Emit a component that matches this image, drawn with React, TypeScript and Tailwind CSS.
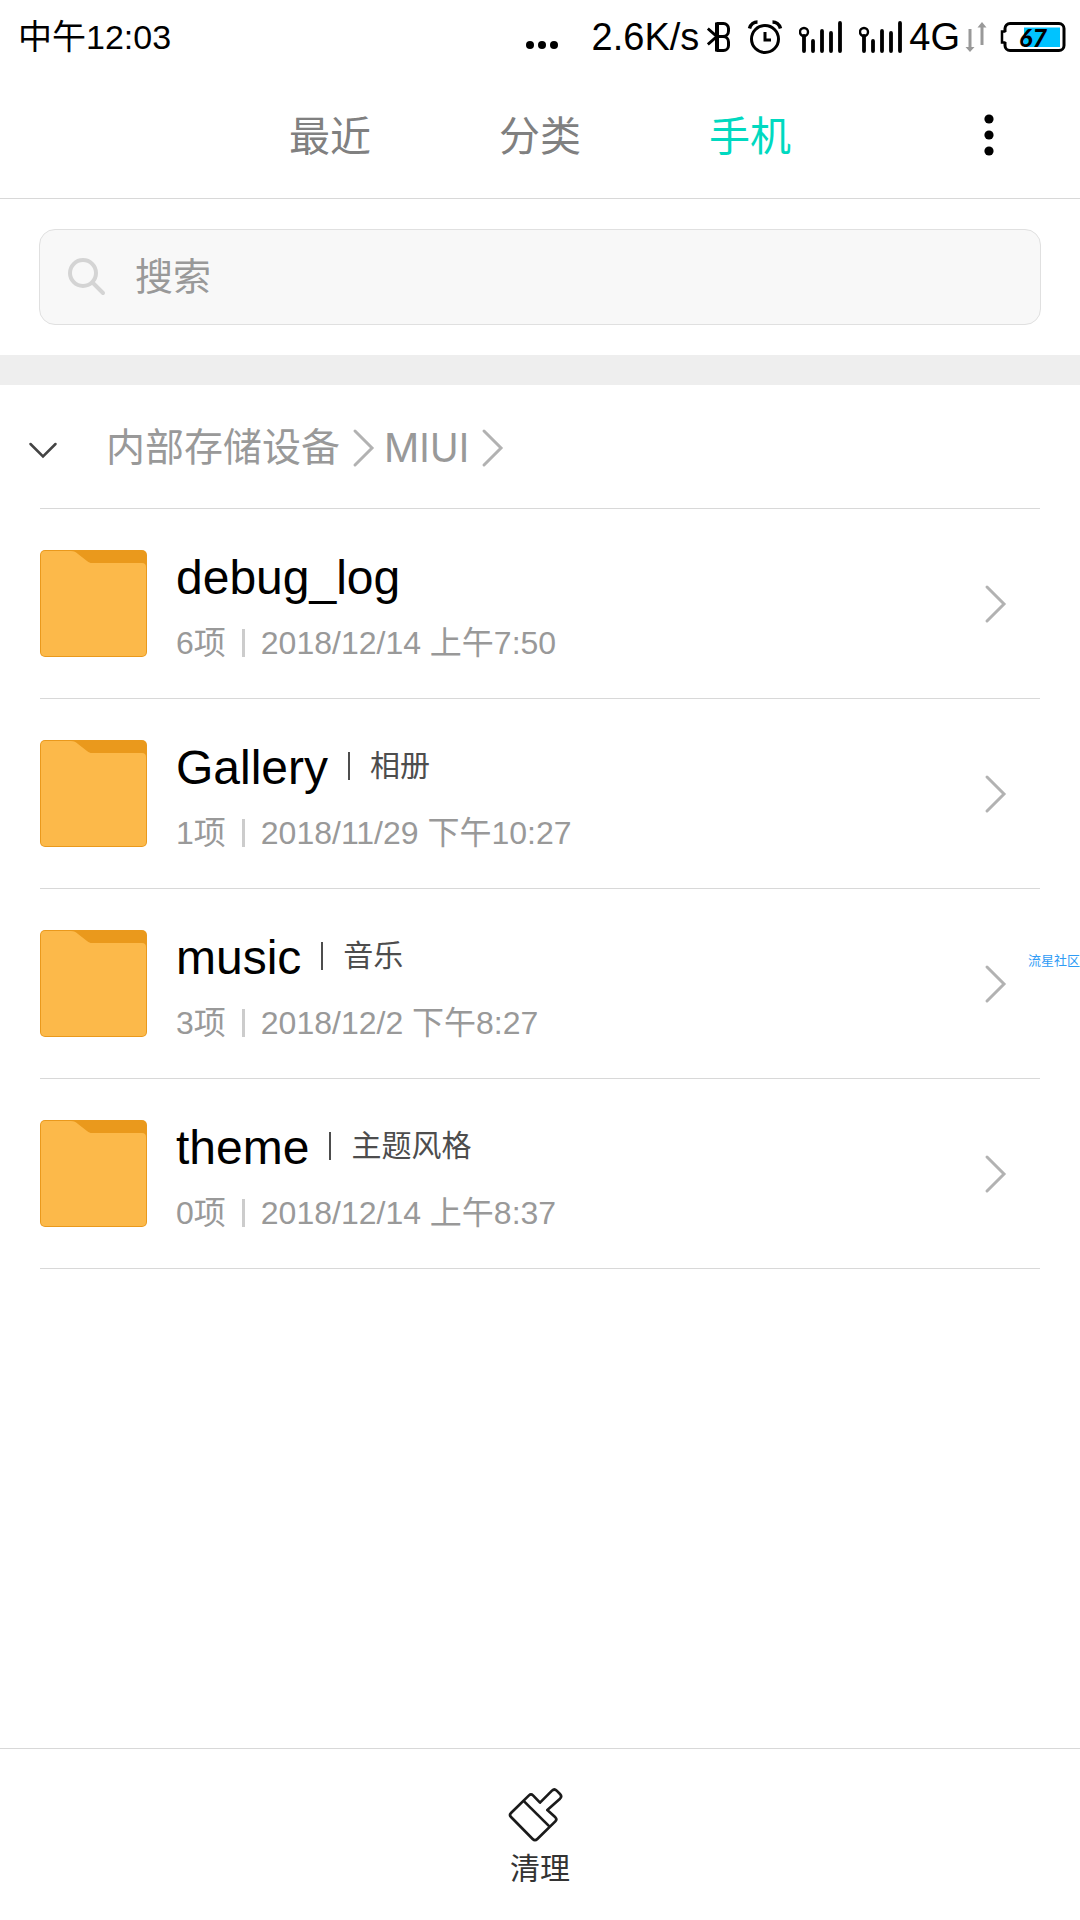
import { useState } from 'react';

interface Folder {
  name: string;
  alias?: string;
  count: number;
  date: string;
  badge?: string;
}

const tabs = ['最近', '分类', '手机'];

const folders: Folder[] = [
  { name: 'debug_log', count: 6, date: '2018/12/14 上午7:50' },
  { name: 'Gallery', alias: '相册', count: 1, date: '2018/11/29 下午10:27' },
  { name: 'music', alias: '音乐', count: 3, date: '2018/12/2 下午8:27', badge: '流星社区' },
  { name: 'theme', alias: '主题风格', count: 0, date: '2018/12/14 上午8:37' },
];

function SignalIcon() {
  return (
    <svg className="w-11 h-8" viewBox="0 0 44 32" fill="none" stroke="#000">
      <circle cx="5" cy="11" r="4" strokeWidth="2.4" />
      <path d="M5 15v15M14 20v10M23 10v20M32 12v18M41 2v28" strokeWidth="3.8" strokeLinecap="round" />
    </svg>
  );
}

function BluetoothIcon() {
  return (
    <svg className="w-6 h-8" viewBox="0 0 24 32" fill="none" stroke="#000" strokeWidth="3">
      <path d="M9.500 2.500h7a5 5 0 0 1 5 5v2.500a5.500 5.500 0 0 1-5.500 5.500h-5M10 15.500h6a5.500 5.500 0 0 1 5.500 5.500v3.500a5 5 0 0 1-5 5h-7" />
      <path d="M10 1.500v29" strokeWidth="4" />
      <path d="M.8 7.500l9 8-9 8" />
    </svg>
  );
}

function AlarmIcon() {
  return (
    <svg className="w-9 h-9" viewBox="0 0 36 36" fill="none" stroke="#000">
      <circle cx="18" cy="20" r="13.500" strokeWidth="3" />
      <path d="M18 13v8h6" strokeWidth="3" />
      <path d="M2.500 9.500c1-4 4.500-6.500 8-6.500M33.500 9.500c-1-4-4.500-6.500-8-6.500" strokeWidth="3.500" />
    </svg>
  );
}

function DataArrows() {
  return (
    <svg className="w-6 h-8" viewBox="0 0 24 32" stroke="#999" fill="#999">
      <path d="M6 8v18M18 6v18" strokeWidth="3" fill="none" />
      <path d="M1.500 26h9L6 31zM13.500 6.500h9L18 1z" stroke="none" />
    </svg>
  );
}

function Battery() {
  return (
    <div className="relative w-[66px] h-8">
      <svg className="w-full h-full" viewBox="0 0 66 32" fill="none">
        <path d="M24 6.500h36v19.500h-36z" fill="#00c3ff" />
        <path d="M5 11V7.500a5 5 0 0 1 5-5h49a5 5 0 0 1 5 5v17a5 5 0 0 1-5 5H10a5 5 0 0 1-5-5V21" stroke="#000" strokeWidth="3" />
        <path d="M5.500 10.500H2v11h3.500" stroke="#000" strokeWidth="2.500" />
      </svg>
      <span className="absolute inset-0 flex items-center justify-center font-['Lato'] text-[25px] leading-8 font-black italic">67</span>
    </div>
  );
}

function FolderIcon() {
  return (
    <svg className="w-[107px] h-[107px] shrink-0" viewBox="0 0 107 107">
      <rect width="107" height="107" rx="5" fill="#ea991c" />
      <path d="M5 1h26c3 0 5 1 7 3l9 7c2 1.500 3 2 5 2h50a4 4 0 0 1 4 4v85a4 4 0 0 1-4 4H5a4 4 0 0 1-4-4V5a4 4 0 0 1 4-4z" fill="#fcb94a" />
    </svg>
  );
}

function Chevron() {
  return (
    <svg className="w-6 h-10 shrink-0" viewBox="0 0 24 40" fill="none" stroke="#b2b2b2" strokeWidth="3" strokeLinecap="round">
      <path d="M3 3l17 17L3 37" />
    </svg>
  );
}

function FolderRow({ folder }: { folder: Folder }) {
  return (
    <li className="relative border-b border-[#d8d8d8]">
      <button className="flex w-full h-[189px] items-center pr-8 text-left">
        <FolderIcon />
        <div className="ml-[29px] flex-1">
          <div className="flex items-center h-[66px]">
            <span className="text-[48px] leading-[66px] text-black">{folder.name}</span>
            {folder.alias && (
              <div className="flex items-center pb-1">
                <span className="mx-5 w-[2px] h-7 bg-[#4d4d4d]" />
                <span className="text-[30px] leading-[40px] text-[#4d4d4d]">{folder.alias}</span>
              </div>
            )}
          </div>
          <div className="mt-3 flex items-center text-[32px] leading-[40px] text-[#999]">
            <span>{folder.count}项</span>
            <span className="mx-4 w-[3px] h-7 bg-[#ccc]" />
            <span>{folder.date}</span>
          </div>
        </div>
        <Chevron />
      </button>
      {folder.badge && (
        <span className="absolute -right-10 top-16 text-[13px] leading-4 text-[#2f9bf5]">{folder.badge}</span>
      )}
    </li>
  );
}

export default function App() {
  const [activeTab, setActiveTab] = useState('手机');
  const [query, setQuery] = useState('');

  return (
    <div className="flex flex-col min-h-screen bg-white font-['Liberation_Sans','Noto_Sans_CJK_SC',sans-serif]">
      {/* status bar */}
      <div className="flex items-center h-[74px] pl-[18px] pr-3.5 text-black">
        <span className="text-[34px] leading-[40px]">中午12:03</span>
        <div className="ml-auto flex items-center">
          <svg className="w-9 h-9 mr-8" viewBox="0 0 36 36">
            <circle cx="6" cy="26" r="4" />
            <circle cx="18" cy="26" r="4" />
            <circle cx="30" cy="26" r="4" />
          </svg>
          <span className="mr-2 text-[38px] leading-[40px]">2.6K/s</span>
          <BluetoothIcon />
          <span className="mx-4"><AlarmIcon /></span>
          <SignalIcon />
          <span className="ml-4 mr-1.5"><SignalIcon /></span>
          <span className="text-[38px] leading-[40px]">4G</span>
          <span className="ml-1 mr-3"><DataArrows /></span>
          <Battery />
        </div>
      </div>

      {/* tabs */}
      <nav className="relative flex justify-center h-[125px] border-b border-[#d8d8d8]">
        {tabs.map(tab => (
          <button
            key={tab}
            onClick={() => setActiveTab(tab)}
            className={`w-[210px] pt-0.5 text-[41px] leading-[60px] ${activeTab === tab ? 'text-[#00d9c0]' : 'text-[#808080]'}`}
          >
            {tab}
          </button>
        ))}
        <button aria-label="更多" className="absolute right-16 inset-y-0 w-[54px] flex items-center justify-center">
          <svg className="w-3 h-12" viewBox="0 0 12 48">
            <circle cx="6" cy="7" r="4.600" />
            <circle cx="6" cy="23" r="4.600" />
            <circle cx="6" cy="39" r="4.600" />
          </svg>
        </button>
      </nav>

      {/* search */}
      <div className="px-[39px] py-[30px] border-b-[30px] border-[#eee]">
        <label className="flex items-center h-24 pl-[27px] border border-[#e0e0e0] rounded-2xl bg-[#f8f8f8]">
          <svg className="w-10 h-10" viewBox="0 0 40 40" fill="none" stroke="#d4d4d4" strokeWidth="4" strokeLinecap="round">
            <circle cx="16" cy="16" r="13" />
            <path d="M26 26l10 10" />
          </svg>
          <input
            type="text"
            aria-label="搜索"
            placeholder="搜索"
            value={query}
            onChange={e => setQuery(e.target.value)}
            className="ml-7 flex-1 min-w-0 bg-transparent text-[38px] leading-[56px] outline-none placeholder:text-[#999]"
          />
        </label>
      </div>

      <main className="flex-1 px-10">
        {/* path */}
        <div className="flex items-center h-[124px] pt-0.5 border-b border-[#d8d8d8] text-[39px] leading-[56px] text-[#999]">
          <button aria-label="展开" className="-ml-3 mr-12">
            <svg className="w-[30px] h-7" viewBox="0 0 30 28" fill="none" stroke="#444" strokeWidth="2.500" strokeLinecap="round">
              <path d="M2.500 10L15 22.500 27.500 10" />
            </svg>
          </button>
          <a href="#storage">内部存储设备</a>
          <span className="ml-3 mr-2"><Chevron /></span>
          <a href="#miui" className="font-['Inter']">MIUI</a>
          <span className="ml-3"><Chevron /></span>
        </div>

        <ul>
          {folders.map(folder => (
            <FolderRow key={folder.name} folder={folder} />
          ))}
        </ul>
      </main>

      <footer className="flex justify-center h-[172px] border-t border-[#d8d8d8]">
        <button className="flex flex-col items-center justify-start pt-[38px] text-[#333]">
          <svg className="w-[66px] h-14" viewBox="141 172 198 168" fill="none" stroke="#1a1a1a" strokeWidth="8" strokeLinejoin="round">
            <path d="M240 219l36-36q7-7 14 0l10 10q7 7 0 14l-38 34 24 22q6 6 0 12l-54 53q-7 7-14 0l-65-66q-6-6 0-12l54-53q6-6 12 0z" />
            <path d="M190 213l78 77" />
          </svg>
          <span className="mt-2.5 text-[30px] leading-[32px]">清理</span>
        </button>
      </footer>
    </div>
  );
}
